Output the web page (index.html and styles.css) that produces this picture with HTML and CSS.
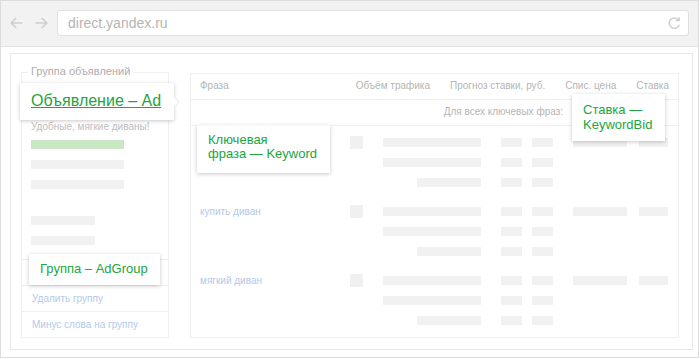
FILE: index.html
```html
<!DOCTYPE html>
<html lang="ru">
<head>
<meta charset="utf-8">
<title>Яндекс.Директ</title>
<link rel="stylesheet" href="styles.css">
</head>
<body>
<div class="window">
  <div class="topbar">
    <svg class="nav-arrow" width="13" height="12" viewBox="0 0 13 12"><path d="M12.5 6H1.2M6.2 1L1.2 6l5 5"/></svg>
    <svg class="nav-arrow nav-fwd" width="13" height="12" viewBox="0 0 13 12"><path d="M0.5 6h11.3M6.8 1l5 5-5 5"/></svg>
    <div class="address">
      <span class="url">direct.yandex.ru</span>
      <svg class="reload" width="14" height="14" viewBox="0 0 14 14"><path d="M11.6 4.2A5.2 5.2 0 1 0 12.3 8.6"/><path d="M12.2 1.2v3.4H8.8"/></svg>
    </div>
  </div>
  <div class="content">
    <div class="panel">
      <div class="group-card">
        <span class="legend">Группа объявлений</span>
        <p class="ad-text">Удобные, мягкие диваны!</p>
        <div class="bar bar-green"></div>
        <div class="bar bar-ad"></div>
        <div class="bar bar-ad"></div>
        <div class="bar bar-short bar-gap"></div>
        <div class="bar bar-short"></div>
        <ul class="group-actions">
          <li></li>
          <li>Удалить группу</li>
          <li>Минус слова на группу</li>
        </ul>
      </div>
      <div class="table-card">
        <div class="thead">
          <span class="th-phrase">Фраза</span>
          <span>Объём трафика</span>
          <span>Прогноз ставки, руб.</span>
          <span>Спис. цена</span>
          <span>Ставка</span>
        </div>
        <div class="tsub">Для всех ключевых фраз:</div>
        <div class="tbody">
          <div class="trow">
            <span class="phrase"></span>
            <span class="check"></span>
            <div class="col col-traffic"><i class="bar"></i><i class="bar"></i><i class="bar bar-end"></i></div>
            <div class="col col-a"><i class="bar"></i><i class="bar"></i><i class="bar"></i></div>
            <div class="col col-b"><i class="bar"></i><i class="bar"></i><i class="bar"></i></div>
            <div class="col col-c"><i class="bar"></i></div>
            <div class="col col-d"><i class="bar"></i></div>
          </div>
          <div class="trow">
            <span class="phrase">купить диван</span>
            <span class="check"></span>
            <div class="col col-traffic"><i class="bar"></i><i class="bar"></i><i class="bar bar-end"></i></div>
            <div class="col col-a"><i class="bar"></i><i class="bar"></i><i class="bar"></i></div>
            <div class="col col-b"><i class="bar"></i><i class="bar"></i><i class="bar"></i></div>
            <div class="col col-c"><i class="bar"></i></div>
            <div class="col col-d"><i class="bar"></i></div>
          </div>
          <div class="trow">
            <span class="phrase">мягкий диван</span>
            <span class="check"></span>
            <div class="col col-traffic"><i class="bar"></i><i class="bar"></i><i class="bar bar-end"></i></div>
            <div class="col col-a"><i class="bar"></i><i class="bar"></i><i class="bar"></i></div>
            <div class="col col-b"><i class="bar"></i><i class="bar"></i><i class="bar"></i></div>
            <div class="col col-c"><i class="bar"></i></div>
            <div class="col col-d"><i class="bar"></i></div>
          </div>
        </div>
      </div>

      <div class="callout callout-ad"><a class="ad-link">Объявление – Ad</a></div>
      <div class="callout callout-keyword">Ключевая<br>фраза — Keyword</div>
      <div class="callout callout-bid">Ставка —<br>KeywordBid</div>
      <div class="callout callout-group">Группа – AdGroup</div>
    </div>
  </div>
</div>
</body>
</html>
```
FILE: styles.css
```css
* { box-sizing: border-box; }
html, body { margin: 0; padding: 0; background: #fff; }
body { font-family: "Liberation Sans", Arial, sans-serif; }

.window {
  width: 699px;
  height: 358px;
  border: 1px solid #dcdcdc;
  background: #fff;
}

.topbar {
  height: 46px;
  background: #f2f2f2;
  border-bottom: 1px solid #e2e2e2;
  display: flex;
  align-items: center;
  padding: 9px 9px 10px 9px;
}
.nav-arrow {
  flex: none;
  fill: none;
  stroke: #cfcfcf;
  stroke-width: 1.6;
}
.nav-fwd { margin-left: 12px; }
.address {
  flex: 1;
  margin-left: 9px;
  height: 26px;
  background: #fff;
  border: 1px solid #e0e0e0;
  border-radius: 3px;
  display: flex;
  align-items: center;
  padding: 0 7px 0 10px;
}
.url {
  flex: 1;
  font-size: 14px;
  color: #b5b5b5;
}
.reload {
  fill: none;
  stroke: #cfcfcf;
  stroke-width: 1.5;
}

.content { padding: 6px 0 0 9px; }

.panel {
  position: relative;
  width: 683px;
  height: 297px;
  border: 1px solid #e8e8e8;
  display: flex;
  align-items: flex-start;
  gap: 21px;
  padding: 18px 13px 12px 10px;
}

/* left card */
.group-card {
  position: relative;
  width: 148px;
  height: 266px;
  border: 1px solid #efefef;
  display: flex;
  flex-direction: column;
  flex: none;
}
.legend {
  position: absolute;
  top: -8px;
  left: 6px;
  padding: 0 3px;
  background: #fff;
  font-size: 11px;
  line-height: 13px;
  color: #adadad;
}
.ad-text {
  margin: 47px 0 0 9px;
  font-size: 10px;
  line-height: 14px;
  color: #bdbdbd;
}
.bar {
  display: block;
  height: 9px;
  background: #f1f1f1;
}
.group-card .bar { margin-left: 9px; width: 93px; margin-top: 11px; }
.group-card .bar-green { background: #c9e7c5; margin-top: 6px; }
.group-card .bar-short { width: 64px; }
.group-card .bar-gap { margin-top: 27px; }
.group-actions {
  list-style: none;
  margin: 14px 0 0 0;
  padding: 0;
}
.group-actions li {
  height: 26px;
  border-top: 1px solid #efefef;
  padding-left: 10px;
  font-size: 10px;
  line-height: 25px;
  color: #b3c9ea;
}

/* table card */
.table-card {
  width: 489px;
  height: 265px;
  margin-top: 1px;
  border: 1px solid #efefef;
  flex: none;
}
.thead {
  height: 26px;
  border-bottom: 1px solid #efefef;
  display: flex;
  align-items: center;
  gap: 20px;
  padding: 0 9px 2px 9px;
  font-size: 10px;
  color: #b5b5b5;
}
.th-phrase { flex: 1; }
.tsub {
  height: 26px;
  border-bottom: 1px solid #efefef;
  display: flex;
  align-items: center;
  justify-content: flex-end;
  padding: 0 115px 2px 0;
  font-size: 10px;
  color: #b5b5b5;
}
.tbody { padding: 10px 9px 12px 9px; }
.trow {
  display: flex;
  align-items: flex-start;
  margin-bottom: 18px;
}
.trow:last-child { margin-bottom: 0; }
.phrase {
  width: 150px;
  flex: none;
  font-size: 10px;
  line-height: 14px;
  color: #b3c9ea;
}
.check {
  width: 13px;
  height: 13px;
  flex: none;
  background: #f0f0f0;
}
.col {
  flex: none;
  margin-top: 2px;
  display: flex;
  flex-direction: column;
  gap: 11px;
}
.col-traffic { width: 98px; margin-left: 20px; }
.col-traffic .bar-end { width: 64px; align-self: flex-end; }
.col-a { width: 21px; margin-left: 20px; }
.col-b { width: 21px; margin-left: 10px; }
.col-c { width: 54px; margin-left: 20px; }
.col-d { width: 29px; margin-left: 12px; }

/* callouts */
.callout {
  position: absolute;
  background: #fff;
  box-shadow: 0 1px 4px rgba(0, 0, 0, 0.22);
  color: #21a53c;
  font-size: 13px;
  padding: 0 11px;
  white-space: nowrap;
}
.callout-ad {
  left: 9px;
  top: 29px;
  width: 154px;
  height: 37px;
  line-height: 36px;
  font-size: 16px;
}
.callout-ad::after {
  content: "";
  position: absolute;
  right: -4px;
  top: 15px;
  width: 7px;
  height: 7px;
  background: #fff;
  border-top: 1px solid #ececec;
  border-right: 1px solid #ececec;
  transform: rotate(45deg);
}
.ad-link {
  color: #21a53c;
  text-decoration: underline;
}
.callout-keyword {
  left: 186px;
  top: 71px;
  width: 133px;
  height: 48px;
  padding-top: 8px;
  line-height: 14px;
}
.callout-bid {
  left: 561px;
  top: 40px;
  width: 93px;
  height: 47px;
  padding-top: 8px;
  line-height: 15px;
}
.callout-group {
  left: 18px;
  top: 200px;
  width: 131px;
  height: 31px;
  line-height: 29px;
}
```
